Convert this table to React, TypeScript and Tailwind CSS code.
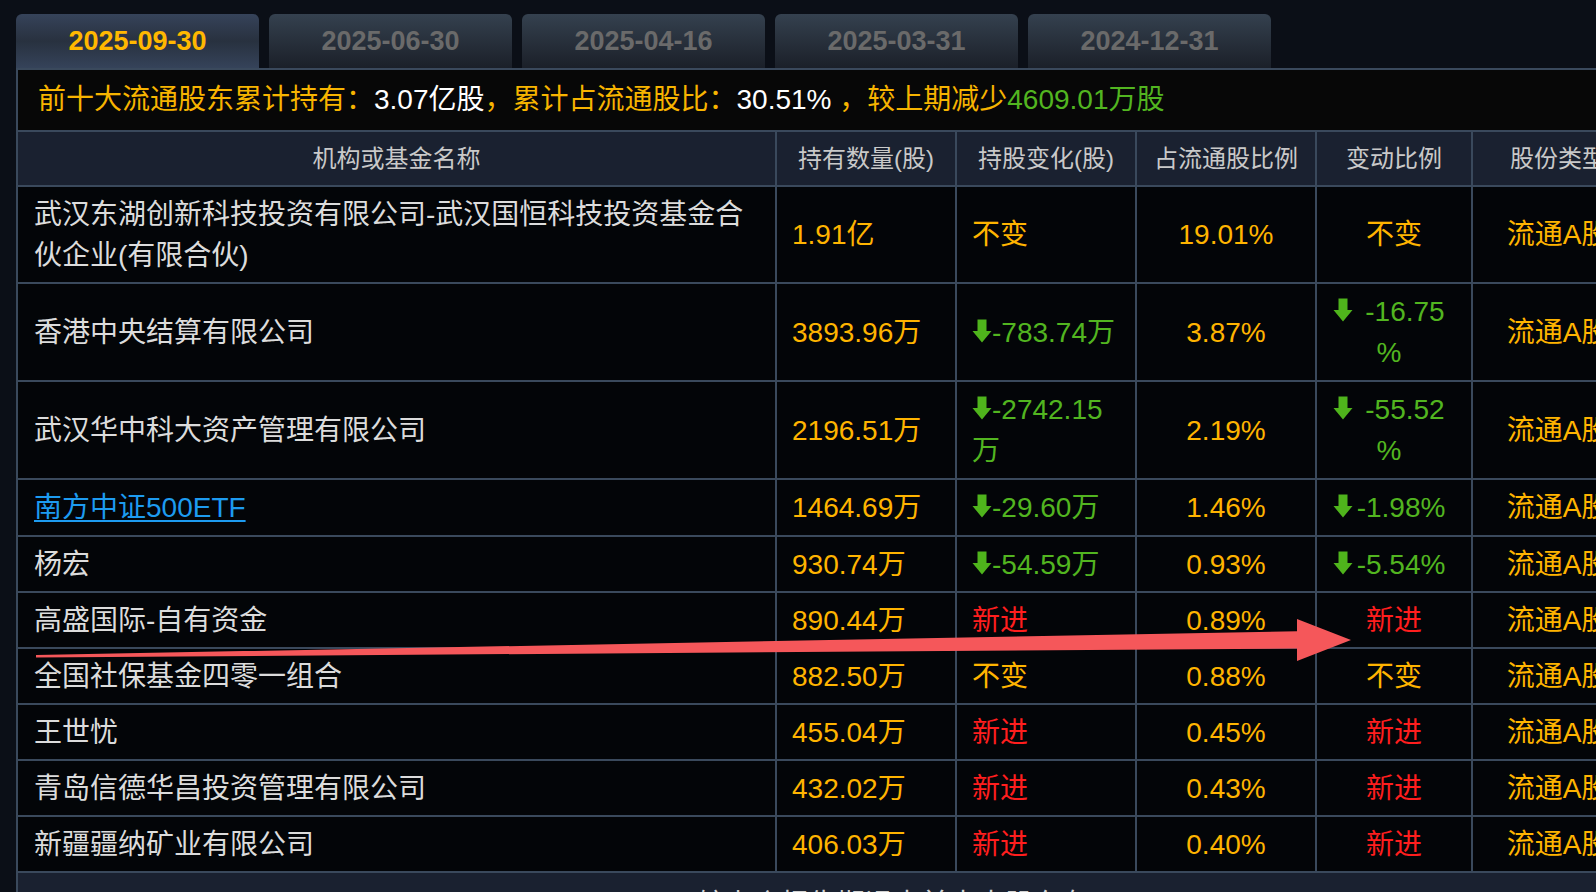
import React from "react";

type Chg =
  | { kind: "same" }
  | { kind: "new" }
  | { kind: "down"; lines: string[] };

type Row = {
  name: React.ReactNode;
  qty: string;
  chg: Chg;
  pct: string;
  ratio: Chg;
};

const Arrow = ({ className = "" }: { className?: string }) => (
  <svg width="20" height="24" viewBox="0 0 20 24" className={`inline-block align-[-1px] ${className}`}>
    <path d="M5.5 0.5h9v11.5h5L10 23.5 0.5 12h5z" fill="#4fb41c" />
  </svg>
);

const rows: Row[] = [
  {
    name: (
      <>
        武汉东湖创新科技投资有限公司-武汉国恒科技投资基金合
        <br />
        伙企业(有限合伙)
      </>
    ),
    qty: "1.91亿",
    chg: { kind: "same" },
    pct: "19.01%",
    ratio: { kind: "same" },
  },
  {
    name: "香港中央结算有限公司",
    qty: "3893.96万",
    chg: { kind: "down", lines: ["-783.74万"] },
    pct: "3.87%",
    ratio: { kind: "down", lines: ["-16.75", "%"] },
  },
  {
    name: "武汉华中科大资产管理有限公司",
    qty: "2196.51万",
    chg: { kind: "down", lines: ["-2742.15", "万"] },
    pct: "2.19%",
    ratio: { kind: "down", lines: ["-55.52", "%"] },
  },
  {
    name: (
      <span className="text-[#1d9bf0] underline decoration-[2px] underline-offset-[3px]">南方中证500ETF</span>
    ),
    qty: "1464.69万",
    chg: { kind: "down", lines: ["-29.60万"] },
    pct: "1.46%",
    ratio: { kind: "down", lines: ["-1.98%"] },
  },
  {
    name: "杨宏",
    qty: "930.74万",
    chg: { kind: "down", lines: ["-54.59万"] },
    pct: "0.93%",
    ratio: { kind: "down", lines: ["-5.54%"] },
  },
  { name: "高盛国际-自有资金", qty: "890.44万", chg: { kind: "new" }, pct: "0.89%", ratio: { kind: "new" } },
  { name: "全国社保基金四零一组合", qty: "882.50万", chg: { kind: "same" }, pct: "0.88%", ratio: { kind: "same" } },
  { name: "王世忧", qty: "455.04万", chg: { kind: "new" }, pct: "0.45%", ratio: { kind: "new" } },
  { name: "青岛信德华昌投资管理有限公司", qty: "432.02万", chg: { kind: "new" }, pct: "0.43%", ratio: { kind: "new" } },
  { name: "新疆疆纳矿业有限公司", qty: "406.03万", chg: { kind: "new" }, pct: "0.40%", ratio: { kind: "new" } },
];

const ChgLeft = ({ c }: { c: Chg }) => {
  if (c.kind === "same") return <span className="text-[#ffb400]">不变</span>;
  if (c.kind === "new") return <span className="text-[#ff1e1e]">新进</span>;
  return (
    <div className="text-[#52b520]">
      {c.lines.map((l, i) => (
        <div key={i}>
          {i === 0 && <Arrow />}
          {l}
        </div>
      ))}
    </div>
  );
};

const ChgCenter = ({ c }: { c: Chg }) => {
  if (c.kind === "same") return <span className="text-[#ffb400]">不变</span>;
  if (c.kind === "new") return <span className="text-[#ff1e1e]">新进</span>;
  const multi = c.lines.length > 1;
  return (
    <div className="text-[#52b520] text-center pr-[10px]">
      {c.lines.map((l, i) => (
        <div key={i}>
          {i === 0 && <Arrow className={multi ? "mr-[12px]" : "mr-[4px]"} />}
          {l}
        </div>
      ))}
    </div>
  );
};

const tabs = ["2025-09-30", "2025-06-30", "2025-04-16", "2025-03-31", "2024-12-31"];
const headers = ["机构或基金名称", "持有数量(股)", "持股变化(股)", "占流通股比例", "变动比例", "股份类型"];

export default function App() {
  return (
    <div className="relative w-[1596px] h-[892px] overflow-hidden bg-[#0b0f17] font-['Liberation_Sans','Noto_Sans_CJK_SC',sans-serif]">
      {/* tabs */}
      <div className="flex gap-[10px] pl-[16px] pt-[14px] h-[68px]">
        {tabs.map((t, i) => (
          <div
            key={t}
            className={
              i === 0
                ? "w-[243px] h-[54px] rounded-t-[6px] flex items-center justify-center text-[27px] font-bold text-[#ffb800] bg-gradient-to-b from-[#36435a] via-[#28313f] to-[#35435a]"
                : "w-[243px] h-[54px] rounded-t-[6px] flex items-center justify-center text-[27px] font-bold text-[#6a6a6a] bg-gradient-to-b from-[#35414f] to-[#1b2029]"
            }
          >
            {t}
          </div>
        ))}
      </div>

      {/* panel / table */}
      <div className="ml-[16px] w-[1700px] grid grid-cols-[757px_178px_178px_178px_154px_170px] grid-rows-[60px_53px_95px_96px_96px_55px_54px_54px_54px_54px_54px_54px_60px] gap-[2px] p-[2px] bg-[#3a495c]">
        {/* summary */}
        <div className="col-span-6 bg-[#070707] flex items-center pl-[20px] text-[28px] whitespace-nowrap">
          <span className="text-[#f7b400]">前十大流通股东累计持有：</span>
          <span className="text-white">3.07亿股</span>
          <span className="text-[#f7b400]">，累计占流通股比：</span>
          <span className="text-white">30.51%</span>
          <span className="text-[#f7b400]">&nbsp;，较上期减少</span>
          <span className="text-[#52b520]">4609.01万股</span>
        </div>

        {/* header */}
        {headers.map((h) => (
          <div key={h} className="bg-[#1a2130] flex items-center justify-center text-[24px] text-[#c9c9c9] whitespace-nowrap">
            {h}
          </div>
        ))}

        {/* body */}
        {rows.map((r, idx) => (
          <React.Fragment key={idx}>
            <div className="bg-[#030508] flex items-center px-[16px] text-[28px] leading-[41px] text-[#dcdcdc] whitespace-nowrap">
              <div>{r.name}</div>
            </div>
            <div className="bg-[#030508] flex items-center pl-[15px] text-[28px] leading-[41px] text-[#ffb400] whitespace-nowrap">
              {r.qty}
            </div>
            <div className="bg-[#030508] flex items-center pl-[15px] text-[28px] leading-[41px] whitespace-nowrap">
              <ChgLeft c={r.chg} />
            </div>
            <div className="bg-[#030508] flex items-center justify-center text-[28px] leading-[41px] text-[#ffb400] whitespace-nowrap">
              {r.pct}
            </div>
            <div className="bg-[#030508] flex items-center justify-center text-[28px] leading-[41px] whitespace-nowrap">
              <ChgCenter c={r.ratio} />
            </div>
            <div className="bg-[#030508] flex items-center justify-center text-[28px] leading-[41px] text-[#ffb400] whitespace-nowrap">
              流通A股
            </div>
          </React.Fragment>
        ))}

        {/* footer */}
        <div className="col-span-6 bg-[#1a2130] pl-[679px] pt-[11px] text-[28px] leading-[41px] text-[#d0d0d0] whitespace-nowrap">
          较上个报告期退出前十大股东有
        </div>
      </div>

      {/* red annotation arrow */}
      <svg
        className="absolute left-0 top-0 pointer-events-none"
        width="1596"
        height="892"
        viewBox="0 0 1596 892"
      >
        <polygon
          points="36,655 1297,631.3 1297,619 1351,640 1297,661 1297,648.5 36,657.5"
          fill="#f5575a"
        />
      </svg>
    </div>
  );
}
